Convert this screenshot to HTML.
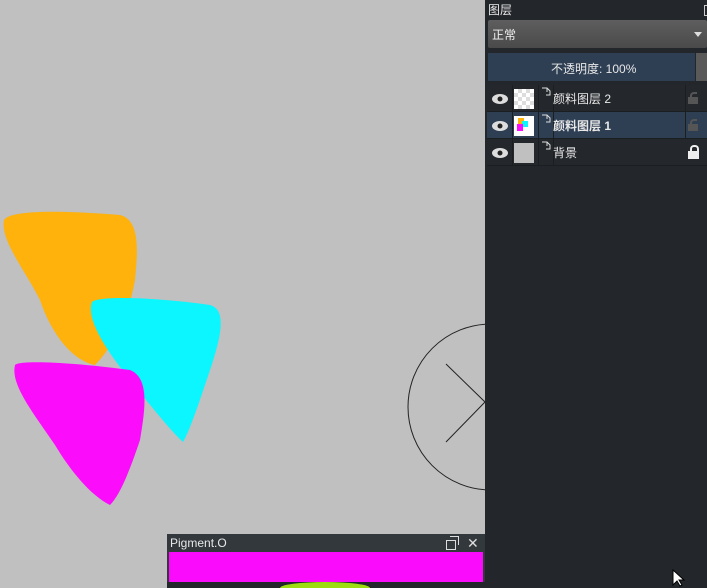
<!DOCTYPE html><html><head><meta charset="utf-8"><style>
html,body{margin:0;width:707px;height:588px;overflow:hidden}
body{background:#c0c0c0;position:relative;font-family:"Liberation Sans","Noto Sans CJK SC",sans-serif;font-size:12px}
.a{position:absolute}
.row{position:absolute;left:487px;width:220px;height:26px;background:#24282c;border-bottom:1px solid #1b1e21}
.row span{position:absolute;color:#e8e8e8;font-size:12px;top:5px;left:66px}
.row i{position:absolute;top:0;height:26px;border-left:1px solid #1b1e21}
</style></head><body>
<svg class="a" style="left:0;top:0" width="485" height="534">
<path d="M4 220 C10 210 60 210 120 215 C140 220 138 250 135 280 C128 320 110 350 95 365 C70 360 50 330 40 300 C25 270 0 240 4 220Z" fill="#ffb10c"/>
<path d="M92 302 C100 295 160 298 210 305 C228 310 220 340 210 370 C200 400 190 430 183 442 C170 430 150 405 130 380 C110 355 85 320 92 302Z" fill="#0bf6ff"/>
<path d="M15 365 C20 360 70 362 130 370 C150 378 145 410 140 440 C130 470 120 495 110 505 C90 495 70 470 55 445 C35 415 10 385 15 365Z" fill="#fb0dfb"/>
<circle cx="491" cy="407" r="83" fill="none" stroke="#222" stroke-width="1"/>
<path d="M446 364 L485 402 L446 442" fill="none" stroke="#222"/>
</svg>
<div class="a" style="left:485px;top:0;width:222px;height:588px;background:#23272b"></div>
<div class="a" style="left:488px;top:1px;color:#e8e8e8;font-size:12px">图层</div>
<div class="a" style="left:704px;top:5px;width:5px;height:9px;border:1px solid #ccc"></div>
<div class="a" style="left:488px;top:20px;width:219px;height:28px;background:linear-gradient(#5e5e5e,#4a4a4a);border-radius:2px"></div>
<div class="a" style="left:492px;top:26px;color:#f0f0f0;font-size:12px">正常</div>
<div class="a" style="left:694px;top:32px;width:0;height:0;border-left:4px solid transparent;border-right:4px solid transparent;border-top:5px solid #ddd"></div>
<div class="a" style="left:488px;top:53px;width:207px;height:28px;background:#2e3e53"></div>
<div class="a" style="left:551px;top:60px;color:#e8e8e8;font-size:12px">不透明度: 100%</div>
<div class="a" style="left:696px;top:53px;width:11px;height:28px;background:#5a5a5a"></div>
<div class="row" style="top:85px"><i style="left:25px"></i><i style="left:51px"></i><i style="left:66px"></i><i style="left:198px"></i><span>颜料图层 2</span></div>
<div class="row" style="top:112px;background:#2e3e53"><i style="left:25px"></i><i style="left:51px"></i><i style="left:66px"></i><i style="left:198px"></i><span style="font-weight:bold">颜料图层 1</span></div>
<div class="row" style="top:139px"><i style="left:25px"></i><i style="left:51px"></i><i style="left:66px"></i><span>背景</span></div>
<div class="a" style="left:514px;top:89px;width:20px;height:20px;background:repeating-conic-gradient(#ddd 0 25%,#fff 0 50%) 0 0/8px 8px"></div>
<div class="a" style="left:514px;top:116px;width:20px;height:20px;background:#fff"></div>
<div class="a" style="left:518px;top:118px;width:6px;height:7px;background:#ffb10c"></div>
<div class="a" style="left:522px;top:121px;width:6px;height:6px;background:#0bf6ff"></div>
<div class="a" style="left:517px;top:124px;width:6px;height:7px;background:#fb0dfb"></div>
<div class="a" style="left:514px;top:143px;width:20px;height:20px;background:#c0c0c0"></div>
<svg class="a" style="left:491px;top:91px" width="18" height="70"><g fill="#ddd"><ellipse cx="9" cy="8" rx="8" ry="5"/><ellipse cx="9" cy="35" rx="8" ry="5"/><ellipse cx="9" cy="62" rx="8" ry="5"/></g><g fill="#222"><circle cx="9" cy="8" r="2.5"/><circle cx="9" cy="35" r="2.5"/><circle cx="9" cy="62" r="2.5"/></g></svg>
<svg class="a" style="left:540px;top:86px" width="12" height="70"><g fill="none" stroke="#ddd"><path d="M2 2h5l3 3v4h-4M7 2v4"/><path d="M2 29h5l3 3v4h-4M7 29v4"/><path d="M2 56h5l3 3v4h-4M7 56v4"/></g></svg>
<div class="a" style="left:688px;top:97px;width:10px;height:7px;background:#555"></div>
<div class="a" style="left:690px;top:92px;width:5px;height:5px;border:2px solid #555;border-bottom:none;border-right:none;border-radius:4px 0 0 0"></div>
<div class="a" style="left:688px;top:124px;width:10px;height:7px;background:#555"></div>
<div class="a" style="left:690px;top:119px;width:5px;height:5px;border:2px solid #555;border-bottom:none;border-right:none;border-radius:4px 0 0 0"></div>
<div class="a" style="left:688px;top:151px;width:11px;height:8px;background:#eee"></div>
<div class="a" style="left:690px;top:145px;width:5px;height:6px;border:2px solid #eee;border-bottom:none;border-radius:4px 4px 0 0"></div>
<div class="a" style="left:167px;top:534px;width:318px;height:54px;background:#33383c;overflow:hidden">
<div class="a" style="left:3px;top:2px;color:#e8e8e8;font-size:12px">Pigment.O</div>
<div class="a" style="left:300px;top:1px;color:#ddd;font-size:14px">✕</div>
<div class="a" style="left:279px;top:6px;width:8px;height:8px;border:1px solid #ddd;background:#33383c"></div>
<div class="a" style="left:283px;top:2px;width:8px;height:8px;border:1px solid #ddd;border-left:none;border-bottom:none"></div>
<div class="a" style="left:2px;top:18px;width:314px;height:30px;background:#fb0bfb"></div>
<div class="a" style="left:0;top:48px;width:318px;height:6px;background:#23272b"></div>
<div class="a" style="left:113px;top:48px;width:90px;height:6px;border-radius:45px 45px 0 0/6px 6px 0 0;background:#9ddc10"></div>
</div>
<svg class="a" style="left:672px;top:569px" width="14" height="19"><path d="M1 1v15l4-4 3 5 2-1-3-5h5z" fill="#fff" stroke="#000"/></svg>
</body></html>
